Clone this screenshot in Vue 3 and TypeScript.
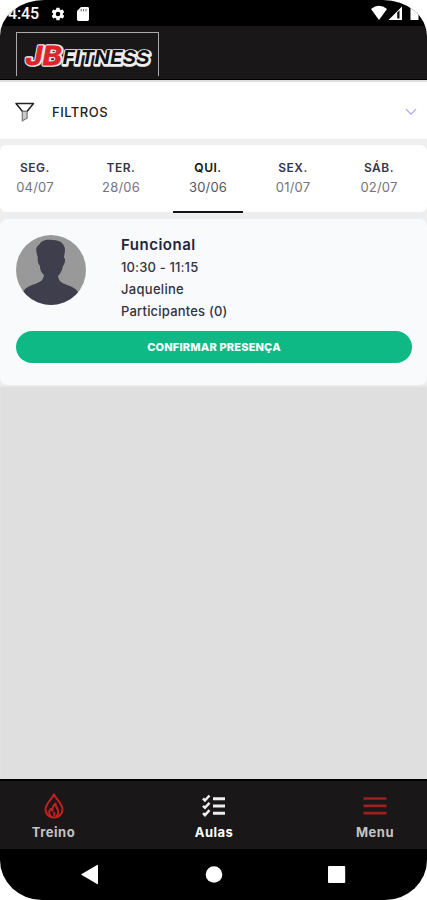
<script setup lang="ts">
interface Day {
  name: string
  date: string
  active?: boolean
}

const days: Day[] = [
  { name: 'SEG.', date: '04/07' },
  { name: 'TER.', date: '28/06' },
  { name: 'QUI.', date: '30/06', active: true },
  { name: 'SEX.', date: '01/07' },
  { name: 'SÁB.', date: '02/07' },
]
</script>

<template>
  <div class="phone">
    <div class="status">
      <span class="clock">4:45</span>
      <svg class="gear" width="16" height="16" viewBox="0 0 24 24" fill="#fff">
        <path fill-rule="evenodd" d="M19.1 12.9a7 7 0 0 0 0-1.8l2-1.6a.5.5 0 0 0 .1-.6l-1.9-3.3a.5.5 0 0 0-.6-.2l-2.4 1a7 7 0 0 0-1.6-1l-.4-2.5a.5.5 0 0 0-.5-.4h-3.8a.5.5 0 0 0-.5.4l-.4 2.5a7 7 0 0 0-1.6 1l-2.4-1a.5.5 0 0 0-.6.2L2.7 8.9a.5.5 0 0 0 .1.6l2 1.6a7 7 0 0 0 0 1.8l-2 1.6a.5.5 0 0 0-.1.6l1.900 3.300a.5.5 0 0 0 .6.2l2.400-1a7 7 0 0 0 1.600 1l.4 2.500a.5.5 0 0 0 .5.4h3.800a.5.5 0 0 0 .5-.4l.4-2.500a7 7 0 0 0 1.600-1l2.400 1a.5.5 0 0 0 .6-.2l1.900-3.300a.5.5 0 0 0-.1-.6zM12 15.400a3.400 3.400 0 1 1 0-6.800 3.400 3.400 0 0 1 0 6.800z" />
      </svg>
      <svg class="sd" width="12" height="14" viewBox="0 0 12 14">
        <path d="M4 0h6.600Q12 0 12 1.400v11.200Q12 14 10.600 14H1.400Q0 14 0 12.600V4z" fill="#fff" />
        <path d="M4.200 2v2.400M6.600 2v2.400M9 2v2.400" stroke="#666" stroke-width="1" />
      </svg>
      <svg class="signals" width="56" height="26" viewBox="0 0 56 26">
        <path d="M0 9Q8 2.500 16 9L8 20z" fill="#fff" />
        <path d="M17.500 20L31 6.500V20z" fill="#fff" />
        <path d="M26.200 18.500v-6l2.300-2.300v8.300z" fill="#111" />
        <path d="M39.500 7h8v13h-8z" fill="#fff" />
      </svg>
    </div>

    <header class="header">
      <div class="logo">
        <svg width="141" height="43" viewBox="0 0 141 43">
          <g class="logo-back">
            <text x="9" y="32" font-size="25" textLength="36" lengthAdjust="spacingAndGlyphs">JB</text>
            <text x="46" y="31.500" font-size="19" textLength="87" lengthAdjust="spacingAndGlyphs">FITNESS</text>
          </g>
          <g aria-hidden="true">
            <text x="8.500" y="31.500" font-size="25" textLength="36" lengthAdjust="spacingAndGlyphs" class="red">JB</text>
            <text x="45.500" y="31" font-size="19" textLength="87" lengthAdjust="spacingAndGlyphs" class="black">FITNESS</text>
          </g>
        </svg>
      </div>
    </header>

    <section class="filters">
      <svg width="20" height="21" viewBox="0 0 20 21" fill="none">
        <path d="M1 1.500h17.500L12 9.500H7.500z" stroke="#222" stroke-width="1.500" stroke-linejoin="round" />
        <path d="M7.300 9.500v9.200l4.800-2.500V9.500" fill="#ccc" stroke="#777" stroke-width="1.200" />
      </svg>
      <span>FILTROS</span>
      <svg class="chevron" width="12" height="8" viewBox="0 0 12 8" fill="none">
        <path d="M1 1.200l5 5 5-5" stroke="#aaa5f4" stroke-width="1.200" />
      </svg>
    </section>

    <nav class="days">
      <div v-for="d in days" :key="d.date" class="day" :class="{ active: d.active }">
        <b>{{ d.name }}</b>
        <span>{{ d.date }}</span>
      </div>
    </nav>

    <article class="card">
      <div class="info">
        <svg class="avatar" width="70" height="70" viewBox="0 0 70 70">
          <defs>
            <clipPath id="round"><circle cx="35" cy="35" r="35" /></clipPath>
          </defs>
          <g clip-path="url(#round)">
            <rect width="70" height="70" fill="#999" />
            <path d="M22 23c-2-7-3-11 1-13 2-5 8-6 14-5 7 0 12 4 12 10 0 3-1 5-1 8 2 0 1 6-1 8-1 5-3 8-5 10 1 6 4 7 9 9 6 2 10 4 12 9v14H7V57c2-4 6-6 12-8 5-2 8-3 9-9-2-2-4-4-4-9-2-2-3-7-2-8z" fill="#3f3e4c" />
          </g>
        </svg>
        <div class="details">
          <h2>Funcional</h2>
          <p class="time">10:30 - 11:15</p>
          <p class="teacher">Jaqueline</p>
          <p class="people">Participantes (0)</p>
        </div>
      </div>
      <button class="confirm">CONFIRMAR PRESENÇA</button>
    </article>

    <main class="blank"></main>

    <nav class="tabs">
      <div class="tab treino">
        <svg width="20" height="26" viewBox="0 0 20 26" fill="none" stroke="#c4201f" stroke-width="2" stroke-linejoin="round">
          <path d="M10 1.500C8 6 1.500 10.500 1.500 16.500c0 4.500 3.500 8 8.500 8s8.500-3.500 8.500-8C18.500 10.500 12 6 10 1.500z" />
          <path d="M7.200 23.500c-2.500-2-2.700-5-.7-7.500l2 1.800c-.4-3.500.8-5.500 3-7.300-.3 3.500 2.800 5 2.800 8.500 0 2-.8 3.500-2 4.500M10.300 23v-4" />
        </svg>
        <span>Treino</span>
      </div>
      <div class="tab aulas">
        <svg width="24" height="26" viewBox="0 0 24 26" fill="none" stroke="#eee">
          <path d="M11 5.700h12M11 13h12M11 20.300h12" stroke-width="3" />
          <path d="M1 5.500l2 2 4.500-5M1 12.800l2 2 4.500-5M1 20.100l2 2 4.500-5" stroke-width="2.500" />
        </svg>
        <span>Aulas</span>
      </div>
      <div class="tab menu">
        <svg width="24" height="26" viewBox="0 0 24 26" stroke="#a11f1f" stroke-width="2.700">
          <path d="M.5 5.500h23M.5 12.800h23M.5 20.200h23" />
        </svg>
        <span>Menu</span>
      </div>
    </nav>

    <div class="system">
      <svg width="427" height="51" viewBox="0 0 427 51" fill="#fff">
        <path d="M81 25.500L97 16q1-.5 1 .8v17.400q0 1.300-1 .8z" />
        <circle cx="214" cy="25.500" r="8.300" />
        <rect x="328" y="17" width="17.200" height="17" rx="1" />
      </svg>
    </div>
  </div>
</template>

<style>
body {
  background: #fff;
}
</style>

<style scoped>
.phone {
  width: 427px;
  height: 900px;
  display: flex;
  flex-direction: column;
  overflow: hidden;
  background: #eee;
  border-radius: 44px 44px 42px 42px / 36px 36px 40px 40px;
  font-family: Inter, Roboto, sans-serif;
}
.status {
  height: 26px;
  flex: none;
  display: flex;
  align-items: center;
  background: #000;
  color: #fff;
}
.clock {
  width: 32px;
  margin-left: 8px;
  padding-top: 2px;
  font: 500 16px/26px Roboto, sans-serif;
  letter-spacing: -0.1px;
}
.gear {
  margin: 2px 0 0 10px;
}
.sd {
  margin: 2px 0 0 11px;
}
.signals {
  margin-left: auto;
}
.header {
  height: 54px;
  flex: none;
  padding: 6px 0 0 16px;
  background: #191718;
  box-sizing: border-box;
  border-bottom: 1px solid #000;
}
.logo {
  width: 141px;
  height: 43px;
  border: 1px solid #aaa;
  border-bottom: 0;
}
.logo svg {
  display: block;
}
.logo text {
  font-family: Inter, sans-serif;
  font-weight: 700;
  font-style: italic;
}
.logo-back text {
  fill: #fff;
  stroke: #eee;
  stroke-width: 3.6px;
  stroke-linejoin: round;
}
.red {
  fill: #e02329;
  stroke: #e02329;
  stroke-width: 0.8px;
}
.black {
  fill: #111;
}
.filters {
  height: 59px;
  flex: none;
  box-sizing: border-box;
  display: flex;
  align-items: center;
  padding: 3px 10px 0 15px;
  border-top: 2px solid #ddd;
  background: #fff;
  color: #222;
  font-size: 13px;
  font-weight: 500;
}
.filters span {
  margin-left: 17px;
  letter-spacing: 0.5px;
}
.chevron {
  margin-left: auto;
}
.days {
  height: 67px;
  flex: none;
  margin-top: 6px;
  display: grid;
  grid-template-columns: repeat(5, 70px);
  column-gap: 16px;
  background: #fff;
  border-radius: 6px;
}
.day {
  display: flex;
  flex-direction: column;
  align-items: center;
  box-sizing: border-box;
  height: 68px;
  padding-top: 13px;
  line-height: 19.5px;
  border-bottom: 2.5px solid transparent;
  color: #75747c;
  font-size: 13px;
}
.day:nth-child(3) {
  margin: 0 -1px 0 1px;
}
.day b {
  color: #35344e;
  font-size: 12px;
  font-weight: 600;
  letter-spacing: 0.5px;
}
.day span {
  letter-spacing: 0.2px;
}
.day.active {
  border-color: #151317;
  color: #57565d;
}
.day.active b {
  color: #111;
}
.card {
  height: 166px;
  flex: none;
  box-sizing: border-box;
  margin-top: 7px;
  padding: 16px 15px 0 16px;
  background: #f9fafc;
  border-radius: 8px;
}
.info {
  display: flex;
  height: 96px;
}
.avatar {
  flex: none;
}
.details {
  margin-left: 35px;
  color: #33323f;
  font-size: 13px;
  font-weight: 500;
}
.details h2 {
  margin: 0 0 1px;
  color: #25243a;
  font-size: 15px;
  font-weight: 600;
  line-height: 20px;
  letter-spacing: 0.5px;
}
.details p {
  margin: 0;
  line-height: 22px;
}
.time {
  letter-spacing: 0.15px;
}
.teacher {
  letter-spacing: 0.3px;
}
.people {
  letter-spacing: 0.2px;
}
.confirm {
  display: block;
  width: 396px;
  height: 32px;
  border: 0;
  border-radius: 16px;
  background: #0fb985;
  color: #fff;
  font: 800 11px/32px Inter, sans-serif;
  letter-spacing: 0.18px;
  padding: 0;
}
.blank {
  flex: 1;
  background: #dfdfdf;
  box-shadow: inset 0 2px 2px #e9e9e9;
}
.tabs {
  height: 70px;
  flex: none;
  box-sizing: border-box;
  display: grid;
  grid-template-columns: 107px 214px 108px;
  border-top: 2px solid #000;
  background: #191718;
}
.tab {
  display: flex;
  flex-direction: column;
  align-items: center;
  padding-top: 12px;
  color: #c4c3c4;
  font-size: 13px;
  font-weight: 700;
  line-height: 17px;
}
.tab span {
  margin-top: 5px;
  letter-spacing: 0.5px;
}
.aulas {
  color: #fff;
}
.system {
  height: 51px;
  flex: none;
  background: #000;
}
.system svg {
  display: block;
}
</style>
